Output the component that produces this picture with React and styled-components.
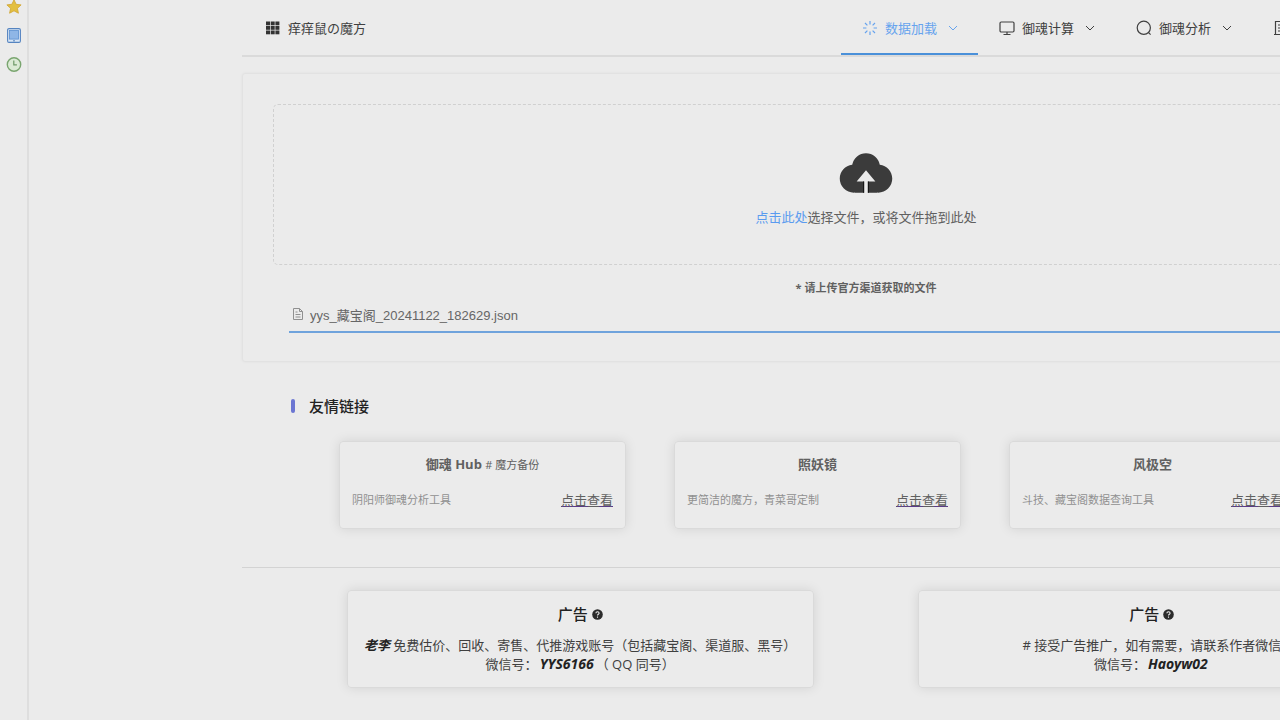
import styled, { createGlobalStyle } from "styled-components";

const navItems = [
  { id: "load", label: "数据加载", icon: "loading", active: true },
  { id: "calc", label: "御魂计算", icon: "monitor" },
  { id: "analysis", label: "御魂分析", icon: "search" },
  { id: "manage", label: "御魂管理", icon: "notebook" },
];

const friendLinks = [
  { id: 1, title: "御魂 Hub", extra: "# 魔方备份", desc: "阴阳师御魂分析工具" },
  { id: 2, title: "照妖镜", desc: "更简洁的魔方，青菜哥定制" },
  { id: 3, title: "风极空", desc: "斗技、藏宝阁数据查询工具" },
];

const iconShapes = {
  loading: (
    <path d="M8 1v3.4M8 11.6V15M1 8h3.4M11.6 8H15M3 3l2.4 2.4M10.6 10.6 13 13M13 3l-2.4 2.4M5.4 10.6 3 13" />
  ),
  monitor: (
    <>
      <rect x="1" y="2" width="14" height="10" rx="1.2" />
      <path d="M8 12v2.5M4.5 14.5h7" />
    </>
  ),
  search: (
    <>
      <circle cx="7.8" cy="7.8" r="6.6" />
      <path d="m12.4 12.4 2.2 2.2" />
    </>
  ),
  notebook: (
    <path d="M1 14.5h14M2.5 14.5v-13h11v13M5 5h6M5 8h6M5 11h6" />
  ),
};

const NavIcon = ({ name }) => (
  <svg width="16" height="16" viewBox="0 0 16 16" fill="none" stroke="currentColor" strokeWidth="1.2">
    {iconShapes[name]}
  </svg>
);

const ArrowIcon = () => (
  <svg width="10" height="10" viewBox="0 0 10 10" fill="none" stroke="currentColor" strokeWidth="1">
    <path d="m1 3 4 4 4-4" />
  </svg>
);

const GridIcon = () => (
  <svg width="14" height="14" viewBox="0 0 14 14" fill="#333">
    {[0.5, 5, 9.5].map((y) =>
      [0, 4.7, 9.4].map((x) => <rect key={`${x}-${y}`} x={x} y={y} width="4" height="3.8" />)
    )}
  </svg>
);

const CloudIcon = () => (
  <svg width="60" height="60" viewBox="0 0 1024 1024" fill="#3b3b3b">
    <path d="M544 864V672h128L512 480 352 672h128v192H320v-1.6c-5.376.32-10.496 1.6-16 1.6A240 240 0 0 1 64 624c0-123.136 93.12-223.488 212.608-237.248A239.808 239.808 0 0 1 512 192a239.872 239.872 0 0 1 235.456 194.752c119.488 13.76 212.48 114.112 212.48 237.248a240 240 0 0 1-240 240c-5.376 0-10.56-1.28-16-1.6v1.6z" />
    <path fill="#151515" d="M462 672h18v192h-18zM544 672h18v192h-18z" />
  </svg>
);

const FileIcon = () => (
  <svg width="12" height="12" viewBox="0 0 12 12" fill="none" stroke="#909090" strokeWidth="1">
    <path d="M1.5.5H7.5L10.5 3.5V11.5H1.5zM7.5.5v3h3M3.5 4h2M3.5 6.5h5M3.5 9h5" />
  </svg>
);

const HelpIcon = () => (
  <svg width="11" height="11" viewBox="0 0 11 11" fill="none">
    <circle cx="5.5" cy="5.5" r="5.3" fill="#2b2b2b" />
    <path d="M3.9 4.2c0-2 3.2-2 3.2 0 0 1.1-1.6 1.1-1.6 2.3M5.5 7.6v1.1" stroke="#ebebeb" strokeWidth="1.1" />
  </svg>
);

const AdTitle = () => (
  <AdHeading>
    广告
    <HelpIcon />
  </AdHeading>
);

const App = () => {
  return (
    <>
      <GlobalStyle />
      <Layout>
        <SideBar>
          <SideButton aria-label="收藏夹">
            <svg width="16" height="15" viewBox="0 0 16 15">
              <path
                d="m8 .8 2.1 4.5 5 .6-3.7 3.4 1 4.9L8 11.8l-4.4 2.4 1-4.9L.9 5.9l5-.6z"
                fill="#e3bf3f"
                stroke="#d2a93a"
                strokeWidth=".9"
                strokeLinejoin="round"
              />
            </svg>
          </SideButton>
          <SideButton aria-label="设备">
            <svg width="16" height="15" viewBox="0 0 16 15">
              <rect x="1.6" y=".6" width="12.8" height="13.8" rx="1.4" fill="#d9e6f5" stroke="#5584c0" strokeWidth="1.1" />
              <rect x="3.5" y="2.5" width="9" height="8.6" fill="#8fb6e6" stroke="#5c90d0" strokeWidth=".8" />
              <path d="M7 12.8h2" stroke="#5584c0" />
            </svg>
          </SideButton>
          <SideButton aria-label="历史记录">
            <svg width="16" height="15" viewBox="0 0 16 15">
              <circle cx="8" cy="7.5" r="6.7" fill="#dbead5" stroke="#79a56f" strokeWidth="1.4" />
              <path d="M7.8 3.6v4.3h3.1" fill="none" stroke="#6f9a68" strokeWidth="1.2" />
            </svg>
          </SideButton>
        </SideBar>
        <Main>
          <Container>
            <Header>
              <Brand>
                <GridIcon />
                痒痒鼠の魔方
              </Brand>
              <Nav>
                {navItems.map((item) => (
                  <NavButton key={item.id} $active={item.active}>
                    <NavIcon name={item.icon} />
                    <NavText>{item.label}</NavText>
                    <ArrowIcon />
                  </NavButton>
                ))}
              </Nav>
            </Header>

            <UploadPanel>
              <DropZone>
                <CloudIcon />
                <p>
                  <PickButton>点击此处</PickButton>选择文件，或将文件拖到此处
                </p>
              </DropZone>
              <UploadTip>* 请上传官方渠道获取的文件</UploadTip>
              <FileRow>
                <FileIcon />
                yys_藏宝阁_20241122_182629.json
              </FileRow>
            </UploadPanel>

            <SectionTitle>友情链接</SectionTitle>
            <LinkList>
              {friendLinks.map((link) => (
                <LinkCard key={link.id}>
                  <LinkTitle>
                    {link.title} {link.extra && <small>{link.extra}</small>}
                  </LinkTitle>
                  <LinkBody>
                    <span>{link.desc}</span>
                    <a href="#view">点击查看</a>
                  </LinkBody>
                </LinkCard>
              ))}
            </LinkList>

            <AdArea>
              <AdCard>
                <AdTitle />
                <p>
                  <em>老李</em> 免费估价、回收、寄售、代推游戏账号（包括藏宝阁、渠道服、黑号）
                </p>
                <p>
                  微信号：<WechatId>YYS6166</WechatId>（ QQ 同号）
                </p>
              </AdCard>
              <AdCard>
                <AdTitle />
                <p># 接受广告推广，如有需要，请联系作者微信</p>
                <p>
                  微信号：<WechatId>Haoyw02</WechatId>
                </p>
              </AdCard>
            </AdArea>
          </Container>
        </Main>
      </Layout>
    </>
  );
};

const GlobalStyle = createGlobalStyle`
  * {
    box-sizing: border-box;
  }
  body {
    margin: 0;
    background-color: #ebebeb;
    color: #404040;
    font-family: "Open Sans", "Noto Sans CJK SC", sans-serif;
    font-size: 13px;
    overflow: hidden;
  }
  p, h2, h3 {
    margin: 0;
  }
  button {
    padding: 0;
    border: none;
    background: none;
    font: inherit;
    color: inherit;
    cursor: pointer;
  }
  svg {
    display: block;
    flex-shrink: 0;
  }
`;
const Layout = styled.div`
  display: flex;
  min-height: 100vh;
`;
const SideBar = styled.aside`
  width: 29px;
  flex-shrink: 0;
  margin-top: -1px;
  padding-left: 6px;
  border-right: 2px solid #dedede;
  display: flex;
  flex-direction: column;
  gap: 14px;
`;
const SideButton = styled.button`
  width: 16px;
`;
const Main = styled.main`
  flex: 1;
  min-width: 0;
  padding-left: 213px;
  overflow: hidden;
`;
const Container = styled.div`
  min-width: 1248px;
`;
const Header = styled.header`
  height: 57px;
  display: flex;
  justify-content: space-between;
  border-bottom: 2px solid #dadada;
`;
const Brand = styled.div`
  display: flex;
  align-items: center;
  gap: 8px;
  padding-left: 24px;
`;
const Nav = styled.nav`
  display: flex;
  padding-right: 101px;
`;
const NavButton = styled.button`
  display: flex;
  align-items: center;
  padding: 2px 20px 0 21px;
  border-bottom: 2px solid ${({ $active }) => ($active ? "#4a90d9" : "transparent")};
  color: ${({ $active }) => ($active ? "#66a3ee" : "#404040")};
`;
const NavText = styled.span`
  margin: 0 11px 0 7px;
`;
const UploadPanel = styled.section`
  margin-top: 16px;
  padding: 30px 30px 28px;
  border: 1px solid #e2e2e2;
  border-radius: 3px;
  box-shadow: 0 0 3px rgba(0, 0, 0, 0.05);
`;
const DropZone = styled.div`
  height: 161px;
  padding-top: 37px;
  border: 1px dashed #d0d0d0;
  border-radius: 5px;
  display: flex;
  flex-direction: column;
  align-items: center;
  line-height: 20px;
  color: #606060;

  p {
    margin-top: 5px;
  }
`;
const PickButton = styled.button`
  color: #5a9bef;
`;
const UploadTip = styled.p`
  margin-top: 15px;
  text-align: center;
  font-size: 11px;
  font-weight: bold;
  line-height: 16px;
  color: #606060;
`;
const FileRow = styled.div`
  height: 30px;
  margin: 7px 16px 0;
  padding: 0 3px 6px;
  border-bottom: 2px solid #6fa3dc;
  display: flex;
  align-items: center;
  gap: 6px;
  font-family: "Liberation Sans", "Noto Sans CJK SC", sans-serif;
  color: #666;
`;
const SectionTitle = styled.h2`
  margin: 34px 0 25px 49px;
  display: flex;
  align-items: center;
  gap: 14px;
  font-size: 15px;
  font-weight: 500;
  line-height: 20px;
  color: #222;

  &::before {
    content: "";
    width: 4px;
    height: 14px;
    border-radius: 2px;
    background-color: #6c76d2;
  }
`;
const LinkList = styled.div`
  display: flex;
  gap: 48px;
  padding: 0 97px 38px;
  border-bottom: 1px solid #d3d3d3;
`;
const Card = styled.article`
  border: 1px solid #dadada;
  border-radius: 4px;
  box-shadow: 0 0 12px rgba(0, 0, 0, 0.1);
`;
const LinkCard = styled(Card)`
  width: 287px;
  height: 88px;
  padding: 12px 12px;
`;
const LinkTitle = styled.h3`
  height: 20px;
  text-align: center;
  font-size: 13px;
  line-height: 20px;
  color: #606060;

  small {
    font-size: 11px;
    font-weight: normal;
  }
`;
const LinkBody = styled.div`
  display: flex;
  justify-content: space-between;
  align-items: center;
  margin-top: 16px;
  font-size: 11px;
  line-height: 20px;
  color: #909090;

  a {
    font-size: 13px;
    color: #606060;
    text-decoration-color: #5b3a8c;
  }
`;
const AdArea = styled.div`
  display: flex;
  justify-content: space-evenly;
  padding-top: 22px;
`;
const AdCard = styled(Card)`
  width: 467px;
  height: 98px;
  padding-top: 13px;
  text-align: center;
  line-height: 19px;
  white-space: nowrap;

  em {
    font-weight: bold;
    color: #222;
  }
`;
const WechatId = styled.em`
  margin: 0 2px;
  font-family: "Noto Sans", sans-serif;
  font-size: 14px;
  line-height: 16px;
`;
const AdHeading = styled.h3`
  margin-bottom: 12px;
  display: flex;
  justify-content: center;
  align-items: center;
  gap: 4px;
  font-size: 15px;
  font-weight: 500;
  line-height: 20px;
  color: #222;
`;

export default App;
